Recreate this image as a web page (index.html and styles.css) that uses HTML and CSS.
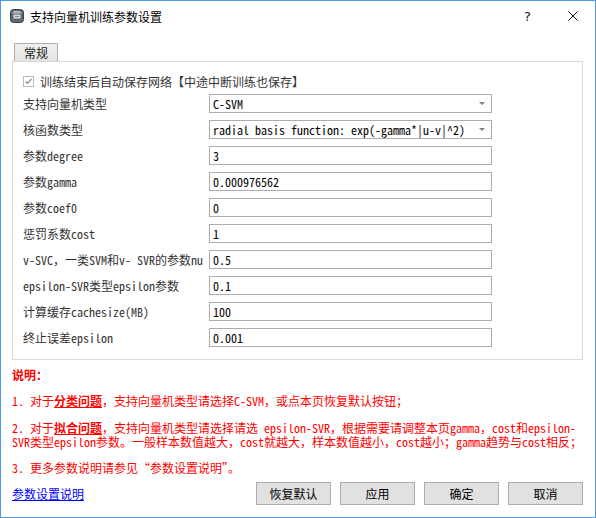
FILE: index.html
```html
<!DOCTYPE html>
<html lang="zh-CN">
<head>
<meta charset="utf-8">
<title>支持向量机训练参数设置</title>
<link rel="stylesheet" href="styles.css">
</head>
<body>
<div class="window">
  <div class="titlebar">
    <svg class="title-icon" width="14" height="14" viewBox="0 0 14 14">
      <rect x="0.5" y="0.5" width="13" height="13" rx="3" fill="#5e6770" stroke="#3b4249"/>
      <path d="M2 4.5 L4 2 L10 2 L12 4.5 Z" fill="#aeb9c4"/>
      <rect x="3.5" y="5.5" width="7" height="4" fill="#d3dbe2"/>
      <rect x="5" y="7" width="4" height="1" fill="#7d8791"/>
    </svg>
    <span class="title-text">支持向量机训练参数设置</span>
    <div class="caption">
      <span class="cap-btn">?</span>
      <span class="cap-btn">
        <svg width="10" height="10" viewBox="0 0 10 10"><path d="M0.5 0.5 L9.5 9.5 M9.5 0.5 L0.5 9.5" stroke="#111" stroke-width="1"/></svg>
      </span>
    </div>
  </div>

  <div class="body">
    <div class="tabs"><span class="tab">常规</span></div>
    <div class="group">
      <div class="check-row">
        <span class="checkbox">
          <svg width="9" height="9" viewBox="0 0 9 9"><path d="M1.5 4.5 L3.5 6.5 L7.5 2" fill="none" stroke="#8c8c8c" stroke-width="1.2"/></svg>
        </span>
        <span class="check-label">训练结束后自动保存网络【中途中断训练也保存】</span>
      </div>
      <div class="form">
        <span class="label">支持向量机类型</span>
        <div class="combo">C-SVM</div>
        <span class="label">核函数类型</span>
        <div class="combo">radial basis function: exp(-gamma*|u-v|^2)</div>
        <span class="label">参数degree</span>
        <div class="input">3</div>
        <span class="label">参数gamma</span>
        <div class="input">0.000976562</div>
        <span class="label">参数coef0</span>
        <div class="input">0</div>
        <span class="label">惩罚系数cost</span>
        <div class="input">1</div>
        <span class="label">v-SVC，一类SVM和v- SVR的参数nu</span>
        <div class="input">0.5</div>
        <span class="label">epsilon-SVR类型epsilon参数</span>
        <div class="input">0.1</div>
        <span class="label">计算缓存cachesize(MB)</span>
        <div class="input">100</div>
        <span class="label">终止误差epsilon</span>
        <div class="input">0.001</div>
      </div>
    </div>

    <div class="notes">
      <p class="note-title">说明：</p>
      <p class="note n1">1. 对于<b>分类问题</b>，支持向量机类型请选择C-SVM，或点本页恢复默认按钮；</p>
      <p class="note n2">2. 对于<b>拟合问题</b>，支持向量机类型请选择请选 epsilon-SVR，根据需要请调整本页gamma，cost和epsilon-SVR类型epsilon参数。一般样本数值越大，cost就越大，样本数值越小，cost越小；gamma趋势与cost相反；</p>
      <p class="note n3">3. 更多参数说明请参见“参数设置说明”。</p>
    </div>

    <div class="footer">
      <a class="help-link" href="#">参数设置说明</a>
      <div class="buttons">
        <span class="btn">恢复默认</span>
        <span class="btn">应用</span>
        <span class="btn">确定</span>
        <span class="btn">取消</span>
      </div>
    </div>
  </div>
</div>
</body>
</html>
```

FILE: styles.css
```css
html, body {
  margin: 0;
  padding: 0;
  background: #ffffff;
}

.window {
  width: 596px;
  height: 518px;
  box-sizing: border-box;
  border: 1px solid #4b9ae8;
  background: #ffffff;
  display: flex;
  flex-direction: column;
  font-family: "Noto Sans Mono CJK SC", "Noto Sans CJK SC", monospace;
  font-size: 12px;
  color: #222;
}

.titlebar {
  height: 30px;
  display: flex;
  align-items: center;
  flex: none;
}

.title-icon {
  margin-left: 9px;
  flex: none;
}

.title-text {
  margin-left: 6px;
  font-family: "Noto Sans CJK SC", sans-serif;
  font-size: 12px;
  color: #000;
}

.caption {
  margin-left: auto;
  display: flex;
  height: 30px;
}

.cap-btn {
  width: 45px;
  height: 30px;
  display: flex;
  align-items: center;
  justify-content: center;
  font-family: "DejaVu Sans", sans-serif;
  font-size: 13px;
  color: #111;
}

.body {
  padding: 0 12px 0 11px;
  display: flex;
  flex-direction: column;
}

.tabs {
  margin-top: 12px;
  display: flex;
  height: 18px;
}

.tab {
  margin-left: 2px;
  box-sizing: border-box;
  height: 18px;
  padding: 0 9px;
  border: 1px solid #adadad;
  border-bottom: none;
  background: linear-gradient(#f0f0f0, #e3e3e3);
  line-height: 17px;
  color: #222;
}

.group {
  border: 1px solid #d9d9d9;
  padding: 10px 0 12px 10px;
}

.check-row {
  height: 18px;
  display: flex;
  align-items: center;
  margin-bottom: 4px;
}

.checkbox {
  width: 11px;
  height: 11px;
  box-sizing: border-box;
  border: 1px solid #bcbcbc;
  background: #fff;
  display: flex;
  align-items: center;
  justify-content: center;
}

.check-label {
  margin-left: 6px;
  color: #333;
}

.form {
  display: grid;
  grid-template-columns: 186px 283px;
  grid-auto-rows: 19px;
  row-gap: 7px;
  align-items: center;
}

.label {
  color: #333;
  white-space: nowrap;
  line-height: 19px;
}

.input, .combo {
  box-sizing: border-box;
  height: 19px;
  border: 1px solid #adadad;
  background: #fff;
  padding: 0 3px;
  line-height: 17px;
  color: #000;
  white-space: nowrap;
  overflow: hidden;
}

.combo {
  position: relative;
}

.combo::after {
  content: "";
  position: absolute;
  right: 6px;
  top: 7px;
  border-left: 3px solid transparent;
  border-right: 3px solid transparent;
  border-top: 3px solid #808080;
}

.notes {
  margin-top: 8px;
  color: #ff0000;
}

.notes p {
  margin: 0;
  line-height: 14px;
}

.note-title {
  font-weight: bold;
}

.n1 { margin-top: 12px !important; }
.n2 { margin-top: 13px !important; }
.n3 { margin-top: 12px !important; }

.note b {
  text-decoration: underline;
  line-height: 14px;
}

.footer {
  margin-top: 7px;
  display: flex;
  align-items: center;
  justify-content: space-between;
}

.help-link {
  color: #0000ff;
  text-decoration: underline;
}

.buttons {
  display: flex;
  gap: 9px;
}

.btn {
  width: 75px;
  height: 23px;
  box-sizing: border-box;
  border: 1px solid #adadad;
  background: #e1e1e1;
  display: flex;
  align-items: center;
  justify-content: center;
  font-family: "Noto Sans CJK SC", sans-serif;
  font-size: 12px;
  color: #000;
}
```
